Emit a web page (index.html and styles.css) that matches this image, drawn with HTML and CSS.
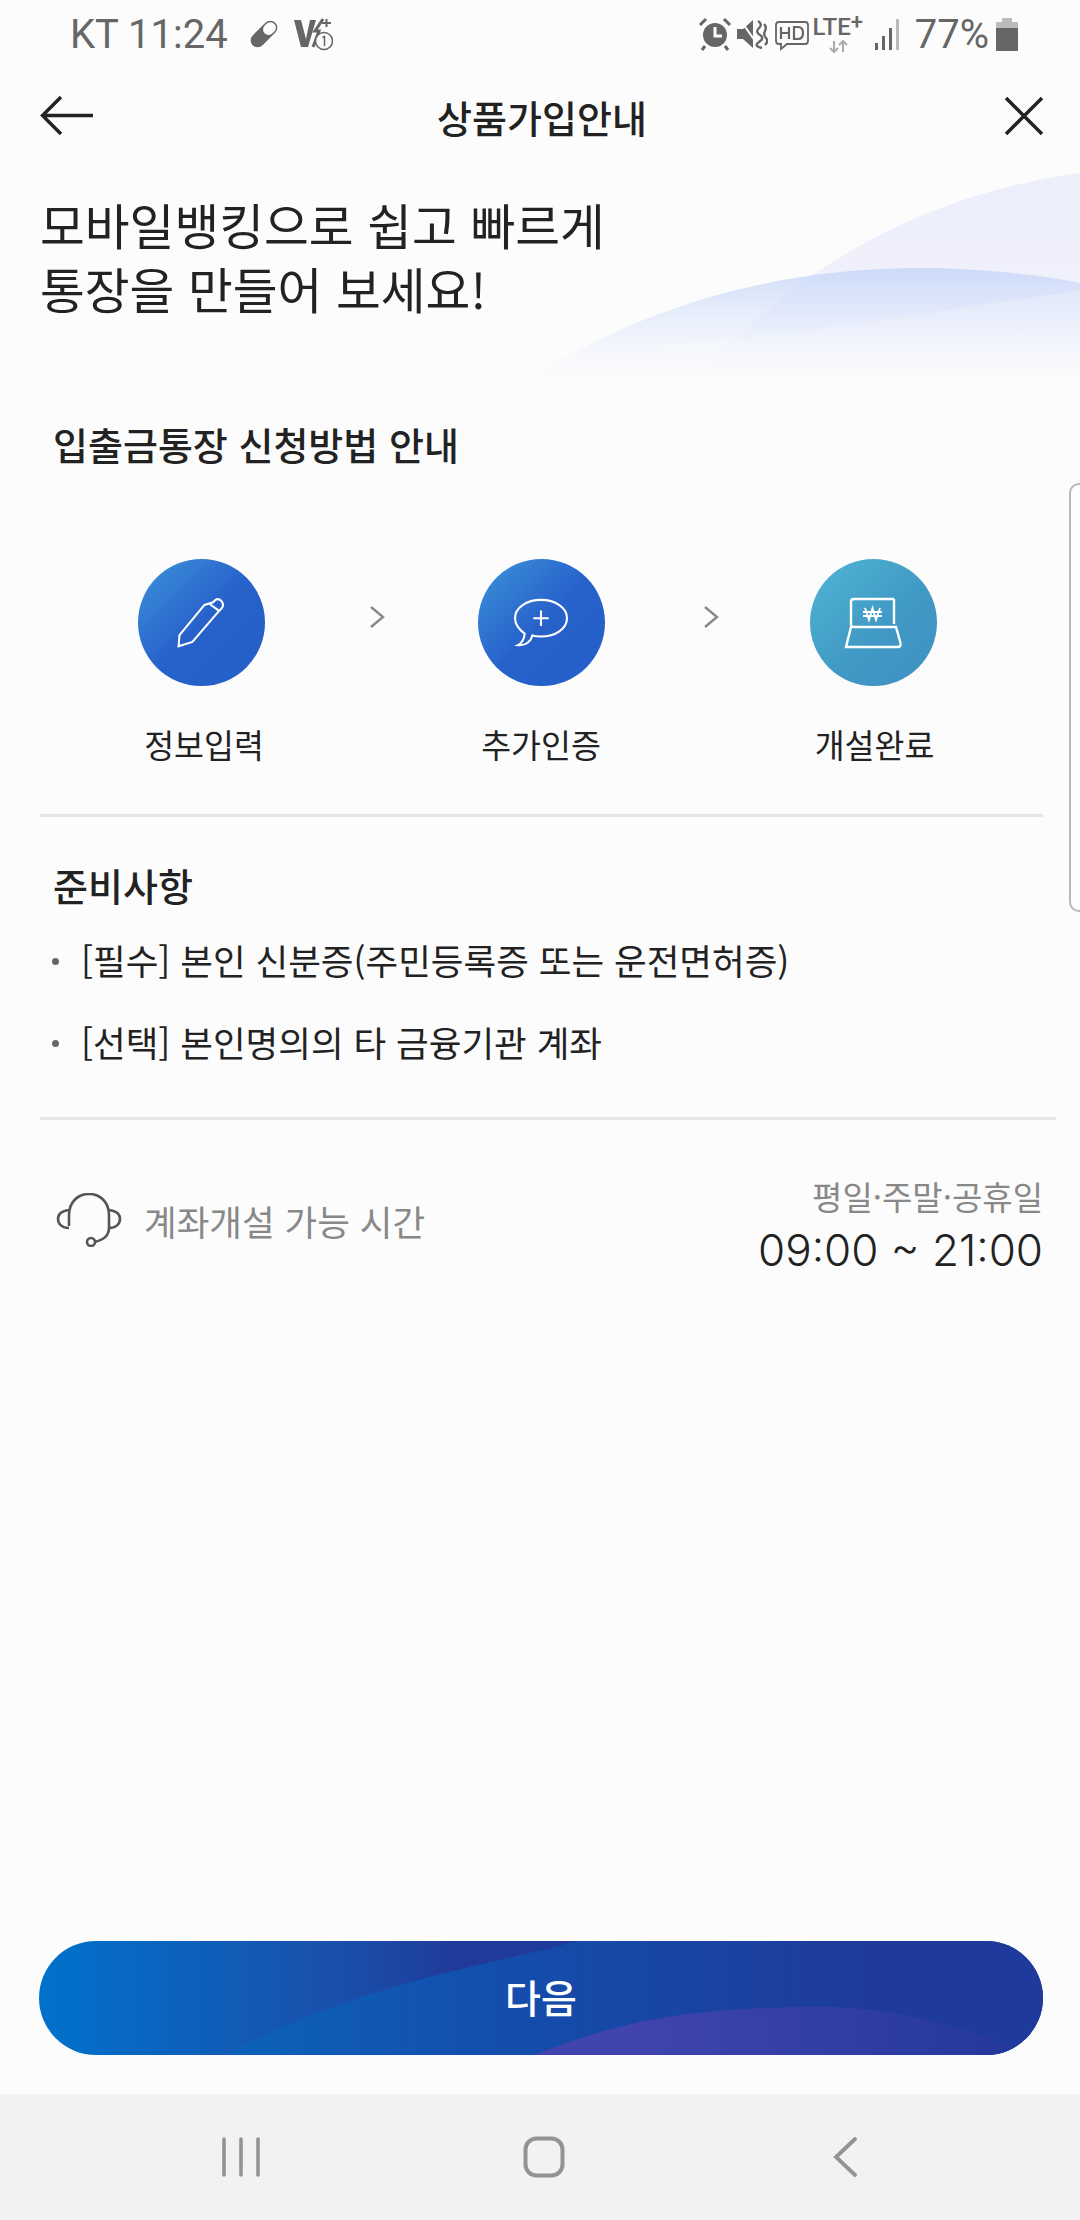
FILE: index.html
```html
<!DOCTYPE html>
<html lang="ko">
    <head>
        <meta charset="utf-8">
        <title>상품가입안내</title>
        <link rel="stylesheet" href="styles.css">
    </head>
    <body>
    <div id="content">
        <svg class="bg-wave" width="1080" height="300" viewBox="0 140 1080 300">
            <defs>
                <linearGradient id="wave-a" x1="0" y1="0" x2="0" y2="1">
                    <stop offset="0" stop-color="#eceefc"/>
                    <stop offset="0.6" stop-color="#f1f1fb"/>
                    <stop offset="1" stop-color="#fcfcfc" stop-opacity="0"/>
                </linearGradient>
                <linearGradient id="wave-b" gradientUnits="userSpaceOnUse" x1="0" y1="268" x2="0" y2="395">
                    <stop offset="0" stop-color="#c4d5f8" stop-opacity="0.8"/>
                    <stop offset="0.5" stop-color="#dfe8fb" stop-opacity="0.5"/>
                    <stop offset="1" stop-color="#fcfcfc" stop-opacity="0"/>
                </linearGradient>
                <linearGradient id="wave-c" gradientUnits="userSpaceOnUse" x1="0" y1="290" x2="0" y2="400">
                    <stop offset="0" stop-color="#fcfcfc" stop-opacity="0.25"/>
                    <stop offset="1" stop-color="#fcfcfc" stop-opacity="0"/>
                </linearGradient>
            </defs>
            <path d="M695 383C790 270 920 195 1080 173V400H695Z" fill="url(#wave-a)"/>
            <path d="M495 403C620 310 770 268 920 268C970 268 1030 273 1080 283V410H495Z" fill="url(#wave-b)"/>
            <path d="M660 345C800 335 950 310 1080 290V410H660Z" fill="url(#wave-c)"/>
        </svg>

        <div class="side-handle"></div>

        <div class="status-bar">
            <div class="status-left">
                <span class="status-text">KT 11:24</span>
                <svg class="st-icon" width="34" height="34" viewBox="0 0 34 34">
                    <g transform="rotate(45 17 17)">
                        <rect x="10" y="1" width="14" height="32" rx="7" fill="#666"/>
                        <rect x="11.5" y="2.5" width="11" height="13.5" rx="5.5" fill="#fcfcfc"/>
                    </g>
                </svg>
                <svg class="st-icon st-volte" width="40" height="34" viewBox="0 0 40 34">
                    <path d="M1 3H8L13 22L17 3H23L15 30H8Z" fill="#666"/>
                    <path d="M20 30L26 14H22L30 2" fill="none" stroke="#666" stroke-width="3"/>
                    <path d="M29 6H38M33.5 2V10" stroke="#666" stroke-width="2"/>
                    <circle cx="31" cy="24" r="8.5" fill="#fcfcfc" stroke="#666" stroke-width="1.5"/>
                    <path d="M29.5 20.5L31.5 19.5V29" fill="none" stroke="#666" stroke-width="1.5"/>
                </svg>
            </div>
            <div class="status-right">
                <svg class="st-icon st-alarm" width="34" height="34" viewBox="0 0 34 34">
                    <circle cx="17" cy="18" r="12" fill="#666"/>
                    <path d="M17 10V19H24" fill="none" stroke="#fcfcfc" stroke-width="3"/>
                    <path d="M2 8L8 2M32 8L26 2M7 29L4 33M27 29L30 33" stroke="#666" stroke-width="3"/>
                </svg>
                <svg class="st-icon" width="32" height="34" viewBox="0 0 32 34">
                    <path d="M1 12H7L17 3V31L7 22H1Z" fill="#666"/>
                    <path d="M5 4L24 31" stroke="#fcfcfc" stroke-width="2"/>
                    <path d="M22 4Q27 7 23 11T24 18T23 25T26 31M28 7Q31 10 29 14T30 21T29 28" fill="none" stroke="#666" stroke-width="2.4"/>
                </svg>
                <svg class="st-icon" width="34" height="34" viewBox="0 0 34 34">
                    <path d="M4 5H30Q33 5 33 8V24Q33 27 30 27H12L6 32V27H4Q1 27 1 24V8Q1 5 4 5Z" fill="none" stroke="#666" stroke-width="1.8"/>
                    <path d="M6 10V22M14 10V22M6 16H14M19 10V22H23Q28 22 28 16T23 10Z" fill="none" stroke="#666" stroke-width="2.2"/>
                </svg>
                <span class="lte">
                    <span class="lte-text">LTE<sup>+</sup></span>
                    <svg width="20" height="13" viewBox="0 0 20 13">
                        <path d="M6 1V12M2 8L6 12L10 8" fill="none" stroke="#aaa" stroke-width="2"/>
                        <path d="M15 12V1M11 5L15 1L19 5" fill="none" stroke="#aaa" stroke-width="2"/>
                    </svg>
                </span>
                <svg class="st-icon st-signal" width="26" height="32" viewBox="0 0 26 32">
                    <rect x="0" y="25" width="3" height="7" fill="#666"/>
                    <rect x="7" y="18" width="3" height="14" fill="#666"/>
                    <rect x="14" y="10" width="3" height="22" fill="#666"/>
                    <rect x="21" y="1" width="3" height="31" fill="#bbb"/>
                </svg>
                <span class="status-text">77%</span>
                <svg class="st-icon" width="22" height="33" viewBox="0 0 22 33">
                    <path d="M6 0H16V4H21Q22 4 22 5V32Q22 33 21 33H1Q0 33 0 32V5Q0 4 1 4H6Z" fill="#bbb"/>
                    <path d="M0 10H22V32Q22 33 21 33H1Q0 33 0 32Z" fill="#666"/>
                </svg>
            </div>
        </div>

        <header class="top-bar">
            <svg class="top-icon" width="54" height="42" viewBox="0 0 54 42">
                <path d="M53 20.5H3M21 2L2.500 20.500L21 39" fill="none" stroke="#222" stroke-width="3.400"/>
            </svg>
            <h1 class="top-title">상품가입안내</h1>
            <svg class="top-icon top-icon-close" width="40" height="40" viewBox="0 0 40 40">
                <path d="M2 2L38 38M38 2L2 38" fill="none" stroke="#222" stroke-width="3.400"/>
            </svg>
        </header>

        <h2 class="headline">모바일뱅킹으로 쉽고 빠르게<br>통장을 만들어 보세요!</h2>

        <h3 class="section-title steps-title">입출금통장 신청방법 안내</h3>

        <div class="steps">
            <div class="step">
                <div class="step-circle">
                    <svg width="50" height="50" viewBox="0 0 58 58">
                        <path d="M3 56L4 43L33 8L43 5L46 2Q50 0 53 4Q56 8 53 12L50 15L19 51Z" fill="none" stroke="#fff" stroke-width="2.400"/>
                        <path d="M39 7L50 15" fill="none" stroke="#fff" stroke-width="2.400"/>
                    </svg>
                </div>
                <span class="step-label">정보입력</span>
            </div>
            <svg class="step-arrow" width="16" height="24" viewBox="0 0 16 24">
                <path d="M2 2L14 12L2 22" fill="none" stroke="#888" stroke-width="2.400"/>
            </svg>
            <div class="step">
                <div class="step-circle">
                    <svg width="56" height="50" viewBox="0 0 58 52">
                        <path d="M12 37C4 31 2 25 2 21C2 10 14 2 29 2C44 2 56 10 56 21C56 32 44 40 29 40C26 40 23 40 20 39C19 44 14 50 5 49C9 47 12 42 12 37Z" fill="none" stroke="#fff" stroke-width="2.200"/>
                        <path d="M29 13V29M21 21H37" fill="none" stroke="#fff" stroke-width="2.200"/>
                    </svg>
                </div>
                <span class="step-label">추가인증</span>
            </div>
            <svg class="step-arrow" width="16" height="24" viewBox="0 0 16 24">
                <path d="M2 2L14 12L2 22" fill="none" stroke="#888" stroke-width="2.400"/>
            </svg>
            <div class="step">
                <div class="step-circle step-circle-teal">
                    <svg width="58" height="52" viewBox="0 0 58 52">
                        <path d="M50 2H10Q7 2 7 5V28Q7 30 10 30H46" fill="none" stroke="#fff" stroke-width="2.400"/>
                        <path d="M50 2V27" fill="none" stroke="#fff" stroke-width="2.400"/>
                        <path d="M7 30L2 50H54Q57 50 56.500 46L52 30H46" fill="none" stroke="#fff" stroke-width="2.400"/>
                        <path d="M21 11L25 23L28.500 11L32 23L36 11M19 15H38M19 19H38" fill="none" stroke="#fff" stroke-width="1.800"/>
                    </svg>
                </div>
                <span class="step-label">개설완료</span>
            </div>
        </div>

        <div class="divider"></div>

        <h3 class="section-title prep-title">준비사항</h3>
        <ul class="prep-list">
            <li>[필수] 본인 신분증(주민등록증 또는 운전면허증)</li>
            <li>[선택] 본인명의의 타 금융기관 계좌</li>
        </ul>

        <div class="divider divider-long"></div>

        <div class="time-row">
            <div class="time-left">
                <svg width="66" height="54" viewBox="0 0 66 54">
                    <path d="M13 33V22C13 10 21 1 33 1C45 1 53 10 53 22V35C53 43 48 47 38 49" fill="none" stroke="#555" stroke-width="2.600"/>
                    <path d="M13 17C5 18 2 22 2 26C2 31 6 35 13 35M53 17C61 18 64 22 64 26C64 31 60 35 53 35" fill="none" stroke="#555" stroke-width="2.600"/>
                    <circle cx="35" cy="49" r="4" fill="none" stroke="#555" stroke-width="2.600"/>
                </svg>
                <span class="time-label">계좌개설 가능 시간</span>
            </div>
            <div class="time-right">
                <span class="time-days">평일·주말·공휴일</span>
                <span class="time-hours">09:00 ~ 21:00</span>
            </div>
        </div>

        <div class="spacer"></div>

        <button class="next-button">
            <svg class="next-wave" width="1004" height="114" viewBox="0 0 1004 114">
                <defs>
                    <linearGradient id="btn-a" gradientUnits="userSpaceOnUse" x1="188" y1="0" x2="820" y2="0">
                        <stop offset="0" stop-color="#0c62ba"/>
                        <stop offset="0.4" stop-color="#134fae"/>
                        <stop offset="1" stop-color="#1e3b9b"/>
                    </linearGradient>
                    <linearGradient id="btn-b" gradientUnits="userSpaceOnUse" x1="600" y1="0" x2="980" y2="0">
                        <stop offset="0" stop-color="#4044ac"/>
                        <stop offset="1" stop-color="#24389a"/>
                    </linearGradient>
                </defs>
                <path d="M188 114C300 50 420 30 540 0H1004V114Z" fill="url(#btn-a)"/>
                <path d="M495 114C560 90 620 66 780 66C850 66 910 80 1004 118V114Z" fill="url(#btn-b)"/>
            </svg>
            <span class="next-text">다음</span>
        </button>

        <div class="gap-bottom"></div>

        <nav class="nav-bar">
            <svg width="40" height="40" viewBox="0 0 40 40">
                <path d="M3 2V38M20 2V38M37 2V38" fill="none" stroke="#939393" stroke-width="3.600" stroke-linecap="round"/>
            </svg>
            <svg class="nav-home" width="42" height="42" viewBox="0 0 42 42">
                <rect x="2.500" y="2.500" width="37" height="37" rx="11" fill="none" stroke="#939393" stroke-width="4"/>
            </svg>
            <svg width="24" height="40" viewBox="0 0 24 40">
                <path d="M22 2L3 20L22 38" fill="none" stroke="#939393" stroke-width="3.800" stroke-linecap="round"/>
            </svg>
        </nav>
    </div>
    </body>
</html>
```

FILE: styles.css
```css
* {
    box-sizing: border-box;
}
html, body {
    margin: 0;
    height: 100%;
}
body {
    font-family: "Noto Sans CJK KR", "Noto Sans", sans-serif;
    color: #222;
    background-color: #fcfcfc;
}
#content {
    position: relative;
    display: flex;
    flex-direction: column;
    width: 1080px;
    height: 2220px;
    overflow: hidden;
    background-color: #fcfcfc;
}
.bg-wave {
    position: absolute;
    top: 140px;
    left: 0;
}
.side-handle {
    position: absolute;
    top: 483px;
    left: 1069px;
    width: 20px;
    height: 429px;
    background-color: #fefefe;
    border: 2px solid #b8b8b8;
    border-radius: 14px;
}

/* status bar */
.status-bar {
    position: relative;
    display: flex;
    justify-content: space-between;
    align-items: center;
    height: 66px;
    padding: 2px 62px 0 70px;
}
.status-left, .status-right {
    display: flex;
    align-items: center;
}
.status-left {
    gap: 19px;
}
.status-right {
    gap: 7px;
}
.status-text {
    font-family: "Roboto", sans-serif;
    font-size: 40px;
    color: #666;
}
.st-volte {
    margin-left: -7px;
}
.st-alarm {
    margin-right: -3px;
}
.st-signal {
    margin-right: 7px;
}
.lte {
    display: flex;
    flex-direction: column;
    align-items: center;
    width: 52px;
    margin: 0 4px 0 -4px;
}
.lte-text {
    font-family: "Roboto", sans-serif;
    font-size: 24px;
    line-height: 25px;
    font-weight: 500;
    white-space: nowrap;
    color: #666;
}
.lte-text sup {
    font-size: 22px;
    line-height: 0;
    vertical-align: 6px;
}

/* top bar */
.top-bar {
    position: relative;
    display: grid;
    grid-template-columns: 1fr auto 1fr;
    align-items: center;
    height: 66px;
    padding: 0 36px 0 40px;
    margin-top: 17px;
}
.top-icon-close {
    justify-self: end;
}
.top-title {
    margin: 0;
    font-size: 38px;
    font-weight: 500;
    color: #222;
}

.headline {
    position: relative;
    margin: 43px 0 0 40px;
    font-size: 48.7px;
    line-height: 64px;
    font-weight: 400;
    color: #222;
}
.section-title {
    position: relative;
    margin: 0 0 0 53px;
    font-size: 38px;
    line-height: 50px;
    font-weight: 500;
    color: #222;
}
.steps-title {
    margin-top: 99px;
}

/* step icons */
.steps {
    position: relative;
    display: flex;
    align-items: flex-start;
    padding-left: 137px;
    margin-top: 90px;
}
.step {
    display: flex;
    flex-direction: column;
    align-items: center;
    width: 128px;
    gap: 36px;
}
.step-circle {
    display: flex;
    justify-content: center;
    align-items: center;
    width: 127px;
    height: 127px;
    border-radius: 50%;
    background: linear-gradient(135deg, #3d94da 0%, #2762cb 50%, #245ec8 100%);
}
.step-circle-teal {
    background: linear-gradient(135deg, #50b6d4 0%, #4199c5 55%, #3e91c2 100%);
}
.step-label {
    font-size: 32.5px;
    line-height: 44px;
    white-space: nowrap;
    color: #222;
}
.step:first-child .step-label {
    margin-left: 6px;
}
.step:last-child .step-label {
    margin-left: 3px;
}
.step-arrow {
    margin: 46px 92px 0 104px;
}
.step-arrow + .step + .step-arrow {
    margin: 46px 90px 0 98px;
}

.divider {
    height: 3px;
    width: 1003px;
    margin: 48px 0 0 40px;
    background-color: #e6e6e6;
}
.divider-long {
    width: 1016px;
    margin-top: 51px;
}

.prep-title {
    margin-top: 43px;
}
.prep-list {
    list-style: none;
    margin: 26px 0 0 0;
    padding: 0 0 0 52px;
}
.prep-list li {
    position: relative;
    padding-left: 29px;
    font-size: 35.5px;
    line-height: 48px;
    margin-bottom: 34px;
    color: #222;
}
.prep-list li::before {
    content: "";
    position: absolute;
    left: 0;
    top: 22px;
    width: 7px;
    height: 7px;
    border-radius: 50%;
    background-color: #666;
}
.prep-list li:last-child {
    margin-bottom: 0;
}

/* hours row */
.time-row {
    display: flex;
    justify-content: space-between;
    align-items: center;
    padding: 0 37px 0 56px;
    margin-top: 53px;
}
.time-left {
    display: flex;
    align-items: center;
    gap: 22px;
    margin-bottom: 14px;
}
.time-label {
    font-size: 35.5px;
    color: #888;
}
.time-right {
    display: flex;
    flex-direction: column;
    align-items: flex-end;
}
.time-days {
    font-size: 33px;
    line-height: 46px;
    color: #888;
}
.time-hours {
    font-family: "Inter", sans-serif;
    font-size: 44px;
    line-height: 62px;
    font-weight: 300;
    color: #222;
}

.spacer {
    flex: 1;
}

/* bottom button */
.next-button {
    position: relative;
    flex: none;
    width: 1004px;
    height: 114px;
    margin-left: 39px;
    padding: 0 0 4px 0;
    border: 0;
    overflow: hidden;
    border-radius: 57px;
    background: linear-gradient(90deg, #0072cc 0%, #1a4fab 30%, #203a9a 42%, #1e3b9b 100%);
    font-family: inherit;
}
.next-wave {
    position: absolute;
    top: 0;
    left: 0;
}
.next-text {
    position: relative;
    font-size: 39px;
    font-weight: 500;
    color: #fff;
}
.gap-bottom {
    flex: none;
    height: 39px;
}
.nav-bar {
    display: flex;
    flex: none;
    justify-content: space-between;
    align-items: center;
    height: 126px;
    padding: 0 223px 0 221px;
    background-color: #f2f2f2;
}
.nav-home {
    margin-left: -6px;
}
```
